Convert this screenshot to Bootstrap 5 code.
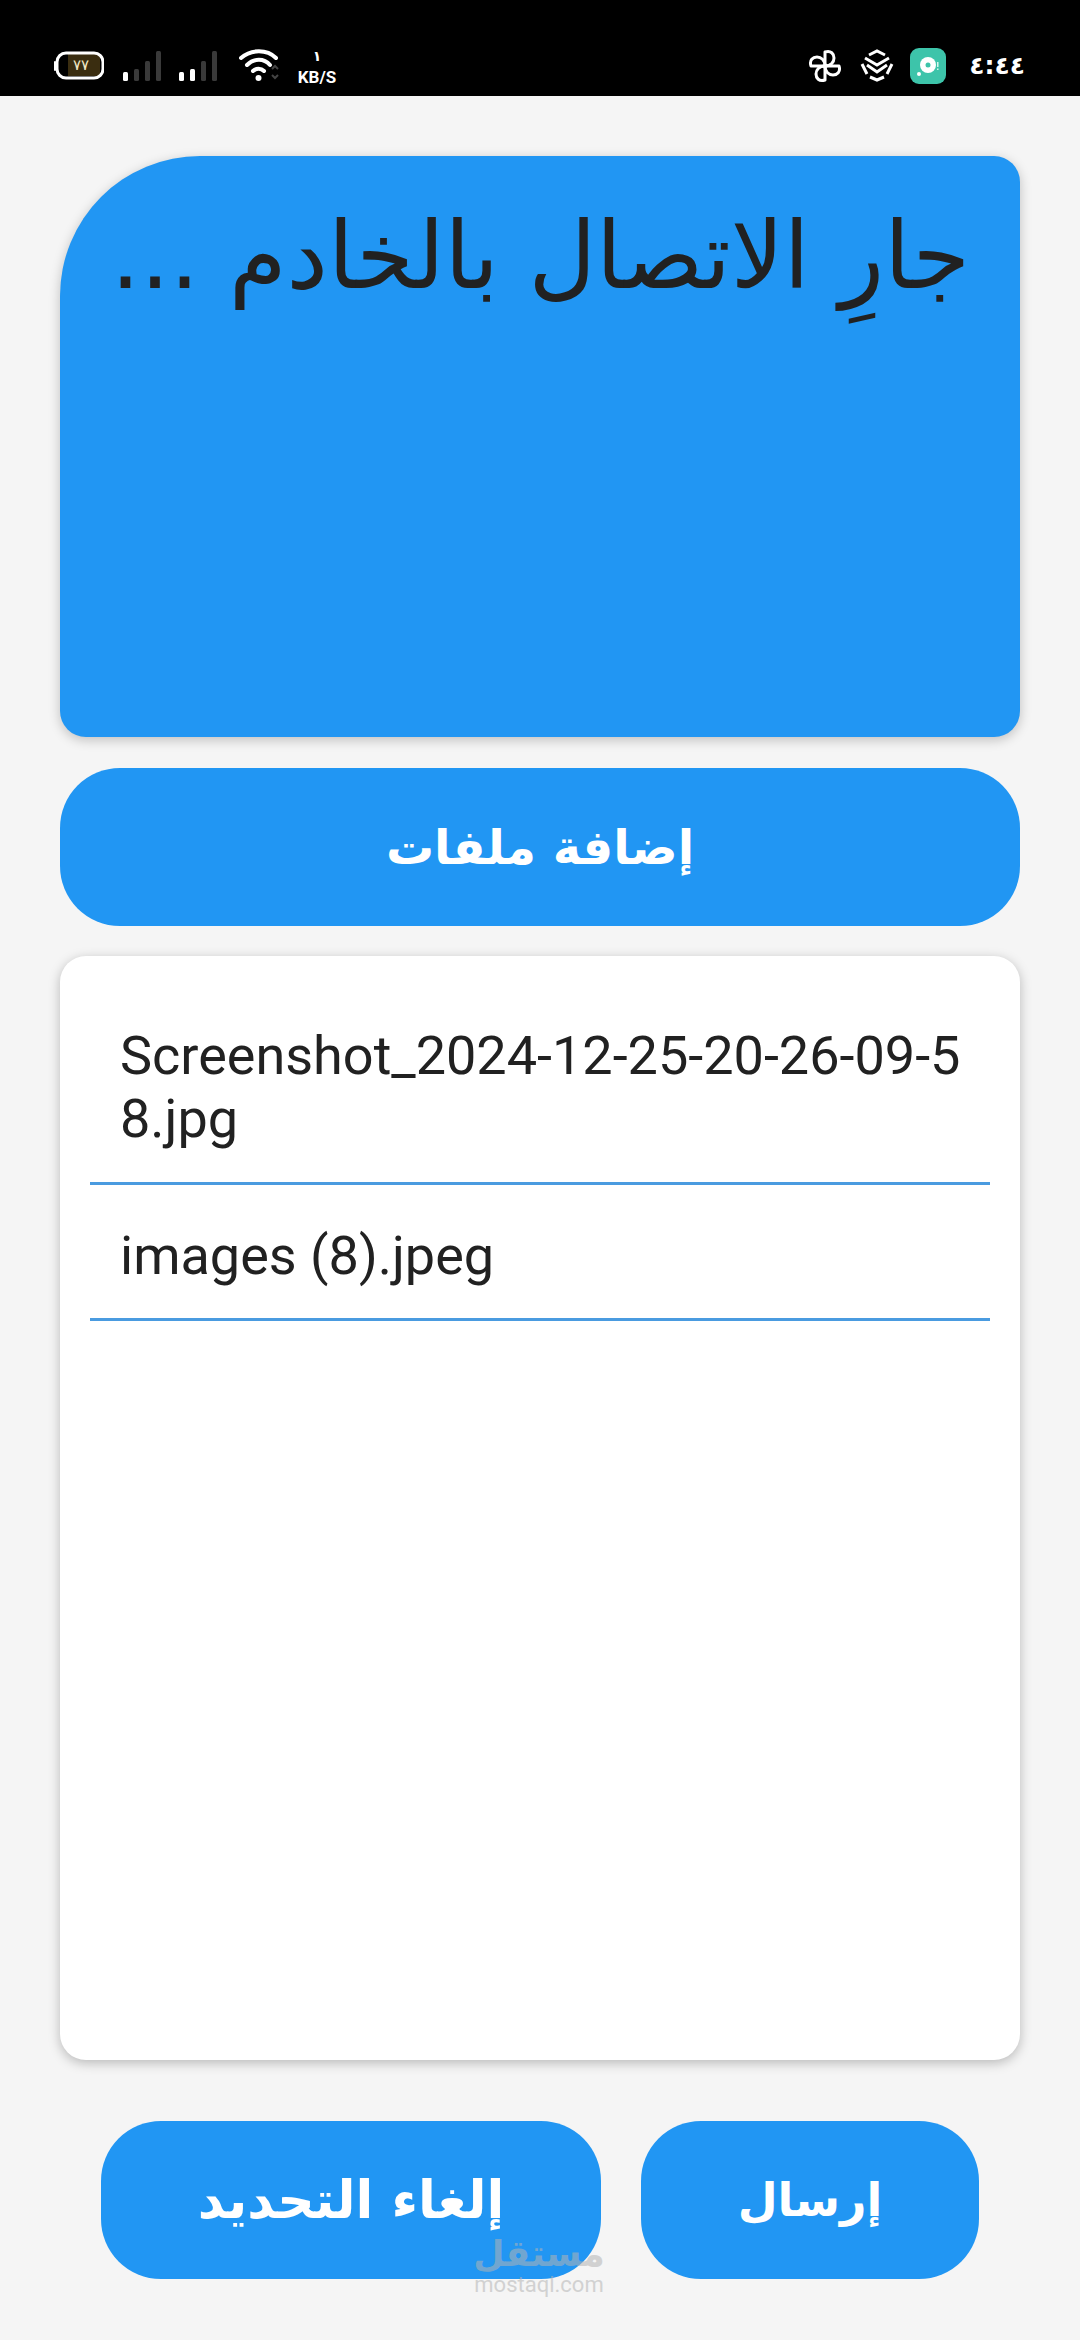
<!DOCTYPE html>
<html lang="ar">
<head>
<meta charset="UTF-8" />
<meta name="viewport" content="width=device-width, initial-scale=1" />
<title>رفع الملفات</title>
<link href="https://cdn.jsdelivr.net/npm/bootstrap@5.3.0/dist/css/bootstrap.min.css" rel="stylesheet" />
<style>
body { width: 1080px; height: 2340px; background: #f5f5f5; overflow: hidden; font-family: Roboto, "DejaVu Sans", sans-serif; color: #212121; }
.status-strip { height: 96px; background: #000; color: #fff; padding: 48px 55px 0 54px; }
.status-strip svg { display: block; }
.speed-box { width: 42px; margin-left: 15px; line-height: 1; font-size: 17px; font-weight: 700; text-align: center; white-space: nowrap; }
.speed-box span { display: block; font-size: 14px; height: 21px; padding-top: 1px; }
.clock-text { font-family: "DejaVu Sans", sans-serif; font-size: 25px; font-weight: 700; line-height: 36px; width: 52px; margin-left: 27px; white-space: nowrap; }
.app-body { padding: 60px 60px 0; }
.status-panel, .pick-btn, .action-btn { background: #2196f3; }
.status-panel { height: 581px; border-radius: 140px 26px 26px 26px; box-shadow: 0 3px 12px rgba(0,0,0,.22); padding: 40px 50px 0 0; }
.status-panel h1 { font-family: "DejaVu Sans", sans-serif; font-size: 93px; font-weight: 400; line-height: 120px; color: #212121; margin: 0; white-space: nowrap; }
.pick-btn, .action-btn { border: 0; color: #fff; font-family: "DejaVu Sans", sans-serif; font-weight: 700; font-size: 48px; height: 158px; border-radius: 60px; }
.pick-btn { width: 100%; margin: 31px 0 30px; display: block; }
.files-panel { height: 1104px; background: #fff; border-radius: 26px; box-shadow: 0 3px 12px rgba(0,0,0,.25); padding: 30px; }
.file-row { border-bottom: 3px solid #4a9be0; padding: 39px 28px 0 30px; font-size: 54px; line-height: 63px; word-break: break-all; margin: 0; }
.file-row:first-child { height: 200px; margin-top: -1px; }
.file-row + .file-row { height: 136px; }
.button-row { margin-top: 61px; gap: 40px; }
.action-btn.wide-one { width: 500px; font-size: 52px; }
.action-btn.short-one { width: 338px; font-size: 46px; }
.site-mark { position: absolute; left: 469px; top: 2236px; width: 140px; text-align: center; color: #b4b4b4; opacity: .55; line-height: 1; }
.site-mark b { display: block; font-family: "DejaVu Sans", sans-serif; font-size: 36px; }
.site-mark span { display: block; font-size: 22px; margin-top: 2px; }
</style>
</head>
<body>
<div class="status-strip d-flex justify-content-between align-items-start">
	<div class="d-flex align-items-start">
		<svg width="50" height="36" viewBox="0 0 50 36">
			<rect x="14" y="5" width="32" height="23" fill="#3a2d10" />
			<rect x="3" y="5" width="46" height="25" rx="9" fill="none" stroke="#fff" stroke-width="3" />
			<rect x="0" y="13" width="2" height="10" rx="1" fill="#fff" />
			<text x="27" y="22" font-size="15" fill="#f1e6c4" text-anchor="middle" font-family="DejaVu Sans">٧٧</text>
		</svg>
		<svg width="40" height="36" viewBox="0 0 40 36" style="margin-left:19px">
			<rect x="0" y="24" width="5" height="9" rx="1.5" fill="#fff" />
			<rect x="11" y="21" width="5" height="12" rx="1.5" fill="#3a3a3a" />
			<rect x="22" y="13" width="5" height="20" rx="1.5" fill="#3a3a3a" />
			<rect x="33" y="3" width="5" height="30" rx="1.5" fill="#3a3a3a" />
		</svg>
		<svg width="40" height="36" viewBox="0 0 40 36" style="margin-left:16px">
			<rect x="0" y="24" width="5" height="9" rx="1.5" fill="#fff" />
			<rect x="11" y="21" width="5" height="12" rx="1.5" fill="#fff" />
			<rect x="22" y="13" width="5" height="20" rx="1.5" fill="#3a3a3a" />
			<rect x="33" y="3" width="5" height="30" rx="1.5" fill="#3a3a3a" />
		</svg>
		<svg width="42" height="36" viewBox="0 0 42 36" style="margin-left:20px">
			<path d="M2 10C12 1 28 1 37 10" fill="none" stroke="#fff" stroke-width="4" stroke-linecap="round" />
			<path d="M8 17C15 10 25 10 31 17" fill="none" stroke="#fff" stroke-width="4" stroke-linecap="round" />
			<path d="M14 23C17 20 22 20 25 23" fill="none" stroke="#fff" stroke-width="4" stroke-linecap="round" />
			<circle cx="19.500" cy="30" r="3" fill="#fff" />
			<path d="M33 21l3-3 3 3M33 27l3 3 3-3" fill="none" stroke="#444" stroke-width="2" />
		</svg>
		<div class="speed-box"><span>١</span>KB/S</div>
	</div>
	<div class="d-flex align-items-start">
		<svg width="34" height="36" viewBox="0 0 34 36">
			<g fill="none" stroke="#fff" stroke-width="3" stroke-linejoin="round">
				<path d="M17 18H3C1 12 5 9 9 9C13 9 17 12 17 18Z" />
				<path d="M17 18V4C23 2 26 6 26 10C26 14 23 18 17 18Z" />
				<path d="M17 18H31C33 24 29 27 25 27C21 27 17 24 17 18Z" />
				<path d="M17 18V32C11 34 8 30 8 26C8 22 11 18 17 18Z" />
			</g>
		</svg>
		<svg width="34" height="36" viewBox="0 0 34 36" style="margin-left:18px">
			<g fill="none" stroke="#fff" stroke-width="3">
				<path d="M9 7L17 3L25 7" />
				<path d="M5 10L17 17L29 10" />
				<path d="M7 17L17 24L27 17" />
				<path d="M2 16L7 26" />
				<path d="M32 16L27 26" />
				<path d="M10 29L17 32L24 29" />
			</g>
		</svg>
		<svg width="36" height="36" viewBox="0 0 36 36" style="margin-left:16px">
			<rect width="36" height="36" rx="9" fill="#3dc4aa" />
			<circle cx="18" cy="17" r="8" fill="#fff" />
			<circle cx="18" cy="17" r="2.500" fill="#3dc4aa" />
			<circle cx="9" cy="26" r="2" fill="#fff" />
			<rect x="27" y="14" width="1.500" height="5" fill="#d6f5ee" />
			<rect x="27" y="20.500" width="1.500" height="1.500" fill="#d6f5ee" />
		</svg>
		<div class="clock-text" dir="rtl">٤:٤٤</div>
	</div>
</div>

<div class="app-body">
	<div class="status-panel" dir="rtl">
		<h1>جارِ الاتصال بالخادم ...</h1>
	</div>
	<button class="pick-btn" type="button" dir="rtl">إضافة ملفات</button>
	<div class="files-panel">
		<p class="file-row">Screenshot_2024-12-25-20-26-09-58.jpg</p>
		<p class="file-row">images (8).jpeg</p>
	</div>
	<div class="button-row d-flex justify-content-center">
		<button class="action-btn wide-one" type="button" dir="rtl">إلغاء التحديد</button>
		<button class="action-btn short-one" type="button" dir="rtl">إرسال</button>
	</div>
</div>

<div class="site-mark"><b dir="rtl">مستقل</b><span>mostaql.com</span></div>

<script src="https://cdn.jsdelivr.net/npm/bootstrap@5.3.0/dist/js/bootstrap.bundle.min.js"></script>
</body>
</html>
